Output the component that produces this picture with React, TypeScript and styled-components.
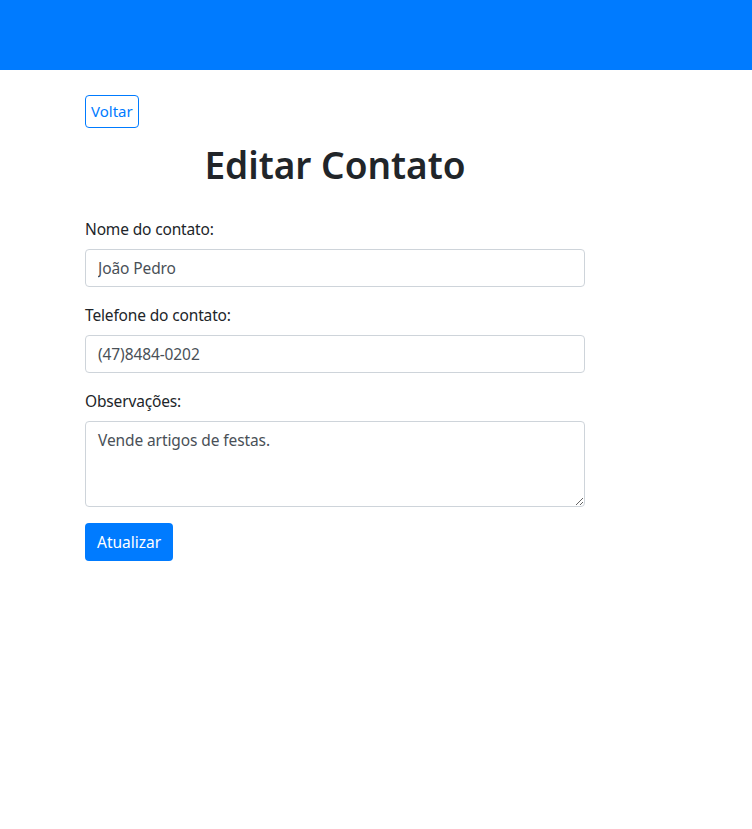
import styled, { createGlobalStyle } from 'styled-components'

const GlobalStyle = createGlobalStyle`
    body {
        margin: 0;
        background: #ffffff;
        font-family: "Noto Sans", "Open Sans", sans-serif;
        color: #212529;
    }
    * {
        box-sizing: border-box;
    }
`

const Header = styled.header`
    height: 70px;
    background-color: #007bff;
`

const Main = styled.main`
    width: 500px;
    margin-left: 85px;
    padding-top: 25px;
`

const BackButton = styled.button`
    font-family: inherit;
    font-size: 15px;
    line-height: 23px;
    padding: 4px 5px;
    color: #007bff;
    background: transparent;
    border: 1px solid #007bff;
    border-radius: 4px;
    cursor: pointer;
`

const Title = styled.h1`
    margin: 13px 0 28px;
    text-align: center;
    font-size: 37px;
    font-weight: 600;
    line-height: 48px;
    color: #212529;
`

const Group = styled.div`
    margin-bottom: 16px;
`

const Label = styled.label`
    display: block;
    margin-bottom: 8px;
    font-size: 15.5px;
    letter-spacing: -0.15px;
    line-height: 24px;
`

const Input = styled.input`
    display: block;
    width: 100%;
    height: 38px;
    padding: 6px 12px;
    font-family: inherit;
    font-size: 15.5px;
    letter-spacing: -0.1px;
    line-height: 24px;
    color: #495057;
    background: #fff;
    border: 1px solid #ced4da;
    border-radius: 4px;
`

const TextArea = styled.textarea`
    display: block;
    width: 100%;
    height: 86px;
    padding: 6px 12px;
    font-family: inherit;
    font-size: 15.5px;
    letter-spacing: -0.1px;
    line-height: 24px;
    color: #495057;
    background: #fff;
    border: 1px solid #ced4da;
    border-radius: 4px;
    resize: vertical;
`

const SubmitButton = styled.button`
    font-family: inherit;
    font-size: 15.5px;
    line-height: 24px;
    padding: 7px 12px;
    color: #fff;
    background-color: #007bff;
    border: none;
    border-radius: 4px;
    cursor: pointer;
`

export default function App() {
    return (
        <>
            <GlobalStyle />
            <Header />
            <Main>
                <BackButton>Voltar</BackButton>
                <Title>Editar Contato</Title>
                <form onSubmit={(e) => e.preventDefault()}>
                    <Group>
                        <Label htmlFor="nome">Nome do contato:</Label>
                        <Input id="nome" type="text" defaultValue="João Pedro" />
                    </Group>
                    <Group>
                        <Label htmlFor="telefone">Telefone do contato:</Label>
                        <Input id="telefone" type="text" defaultValue="(47)8484-0202" />
                    </Group>
                    <Group>
                        <Label htmlFor="obs">Observações:</Label>
                        <TextArea id="obs" rows={3} defaultValue="Vende artigos de festas." />
                    </Group>
                    <SubmitButton type="submit">Atualizar</SubmitButton>
                </form>
            </Main>
        </>
    )
}
